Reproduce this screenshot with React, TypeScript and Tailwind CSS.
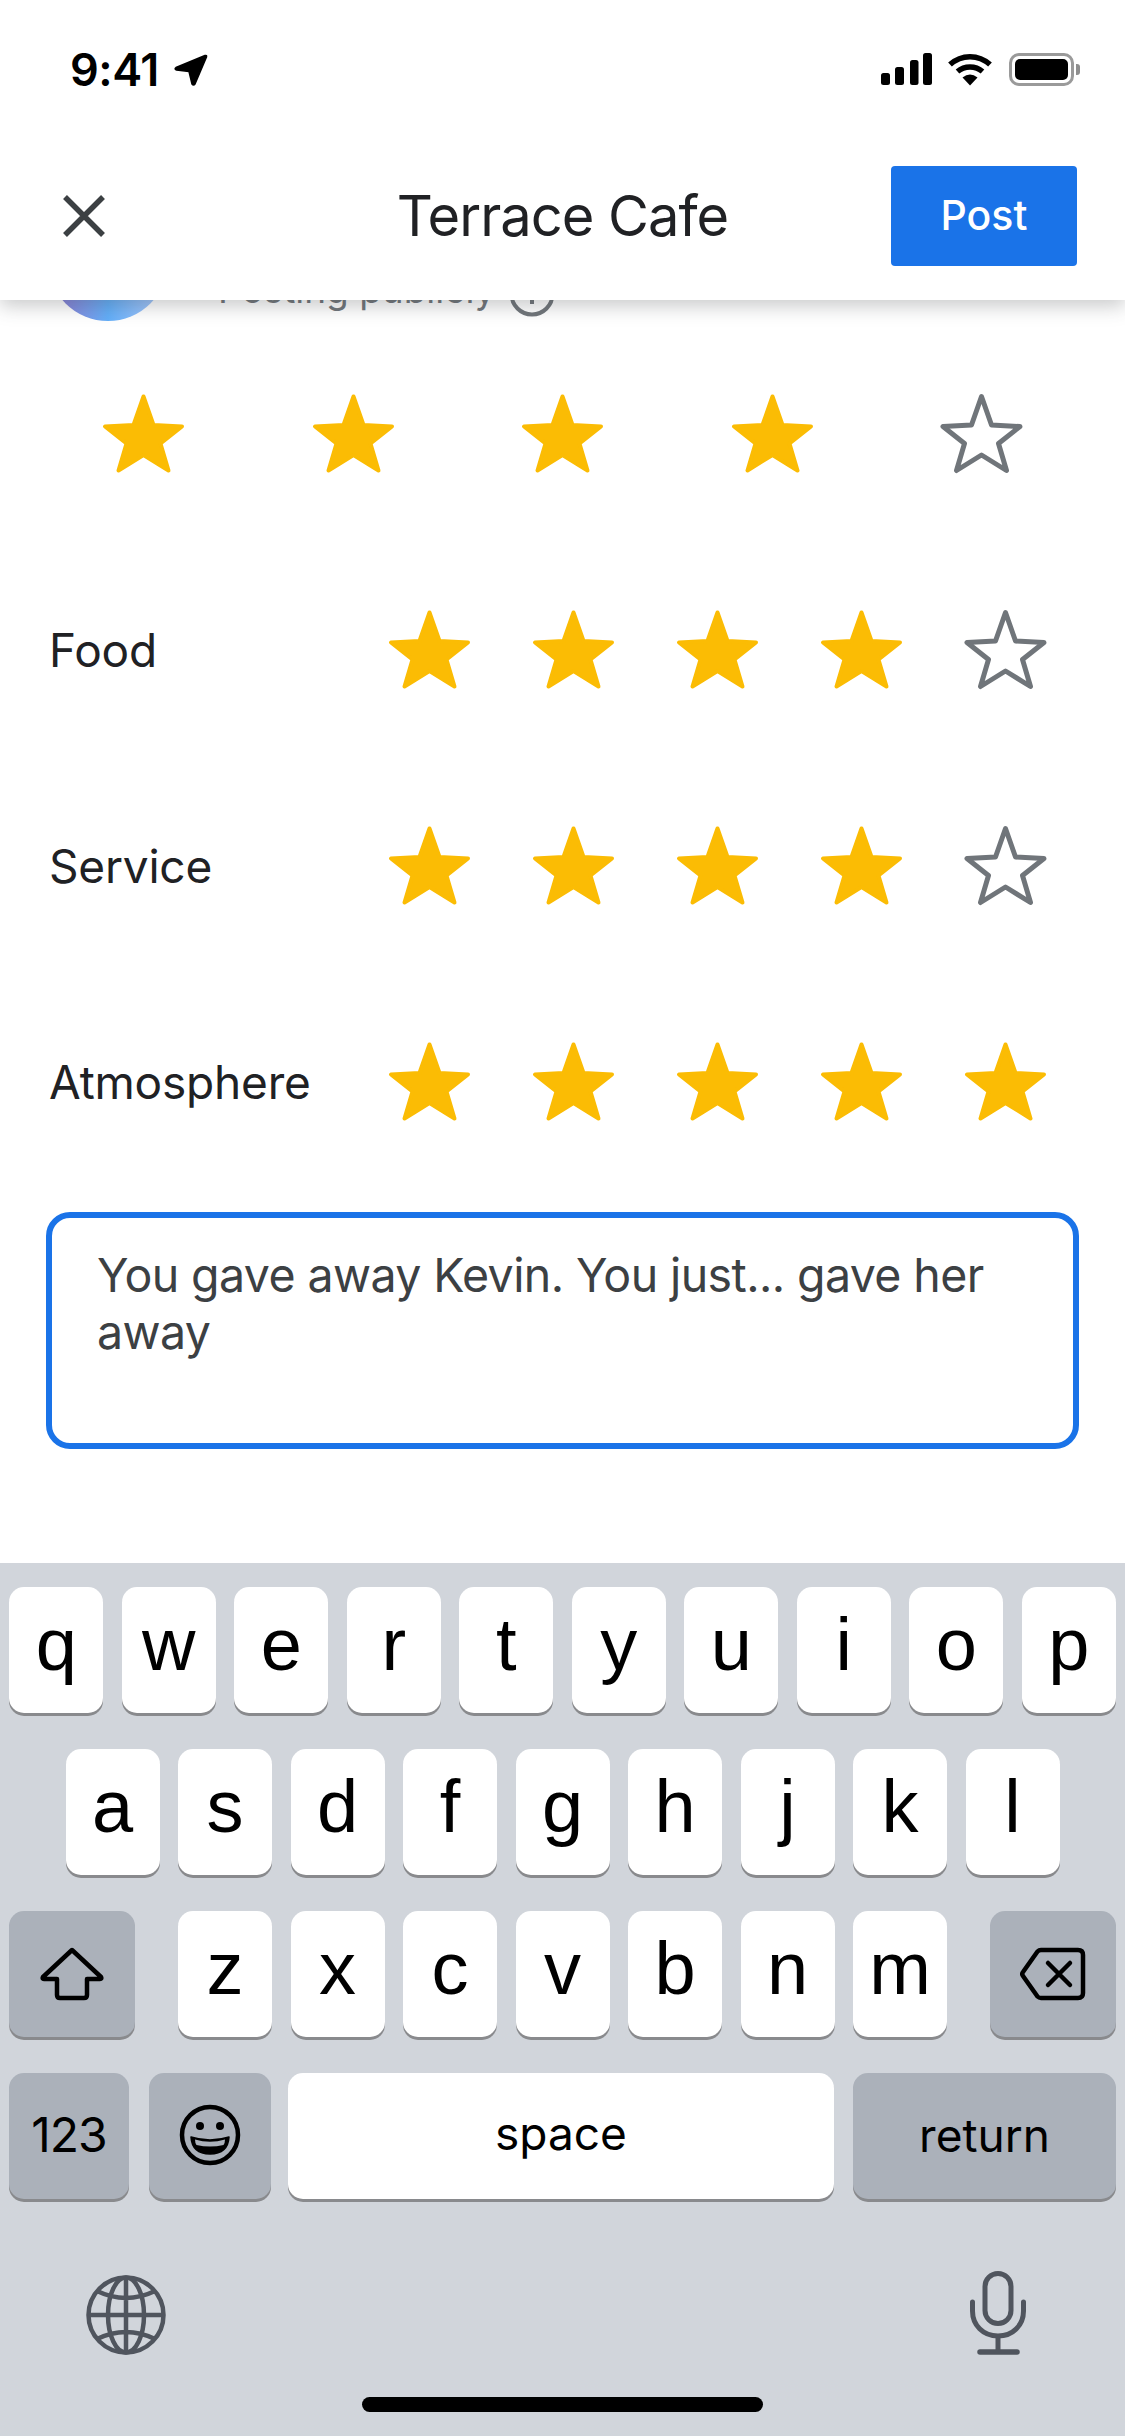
import React from "react";

const FONT = "font-['Inter','Noto_Sans',sans-serif]";
const STAR_POINTS = "40.5,2.5 50.5,31 79,32.5 57.5,49.5 65.5,76.5 40.5,61 15.5,76.5 23.5,49.5 2,32.5 30.5,31";

const Star: React.FC<{ filled: boolean }> = ({ filled }) => (
    <svg width="81" height="79" viewBox="0 0 81 79" className="shrink-0 overflow-visible">
        {filled ? (
            <polygon points={STAR_POINTS} fill="#fbbc04" stroke="#fbbc04" strokeWidth="4" strokeLinejoin="round" />
        ) : (
            <polygon points={STAR_POINTS} fill="none" stroke="#70757a" strokeWidth="5" strokeLinejoin="round" />
        )}
    </svg>
);

const RATINGS = [
    { label: "Food", score: 4 },
    { label: "Service", score: 4 },
    { label: "Atmosphere", score: 5 },
];

const StatusBar: React.FC = () => (
    <div className="relative z-20 bg-white h-[132px] flex justify-between items-start pt-[53px] pl-[70px] pr-[45px]">
        <div className="flex items-center gap-[14px] h-[33px]">
            <span className="text-[45px] leading-[33px] font-semibold text-black tracking-[-0.5px]">9:41</span>
            <svg width="35" height="34" viewBox="0 0 35 34">
                <path d="M32 2.5 L3 14.5 Q1 16 3.5 17 L16 18.5 L19 31 Q20.5 33 22 31 L33.5 4 Q34 2 32 2.5Z" fill="#000" stroke="#000" strokeWidth="1.5" strokeLinejoin="round" />
            </svg>
        </div>
        <div className="flex items-start">
            <svg width="51" height="33" viewBox="0 0 51 33">
                <rect x="0" y="20" width="9" height="12" rx="2.5" fill="#000" />
                <rect x="14" y="14" width="9" height="18" rx="2.5" fill="#000" />
                <rect x="29" y="7" width="8.5" height="25" rx="2.5" fill="#000" />
                <rect x="42" y="0" width="9" height="32" rx="2.5" fill="#000" />
            </svg>
            <svg width="46" height="33" viewBox="0 0 46 33" className="ml-[15px]">
                <path d="M3 11.5 C14.5 1 31.5 1 43 11.5" fill="none" stroke="#000" strokeWidth="5.5" />
                <path d="M10.5 18.5 C17.5 12.5 28.5 12.5 35.5 18.5" fill="none" stroke="#000" strokeWidth="5.5" />
                <path d="M15.5 24.5 Q23 18.5 30.5 24.5 L23 32.5Z" fill="#000" />
            </svg>
            <div className="ml-[16px] flex items-center">
                <div className="w-[65px] h-[33px] rounded-[10px] border-[3px] border-[#9a9a9a] p-[3px]">
                    <div className="w-full h-full rounded-[5px] bg-black" />
                </div>
                <div className="w-[4px] h-[11px] ml-[2px] rounded-r-[3px] bg-[#8e8e8e]" />
            </div>
        </div>
    </div>
);

const NavBar: React.FC = () => (
    <div className="relative z-10 h-[168px] bg-white shadow-[0_6px_18px_rgba(60,64,67,0.28)] grid grid-cols-[1fr_auto_1fr] items-start px-[48px]">
        <svg width="44" height="44" viewBox="0 0 44 44" className="mt-[62px] ml-[14px]">
            <path d="M3 3 L41 41 M41 3 L3 41" stroke="#3c4043" strokeWidth="5.5" fill="none" />
        </svg>
        <h1 className="text-[56px] leading-[60px] mt-[54px] font-normal text-[#202124] tracking-[-1px]">Terrace Cafe</h1>
        <button className="justify-self-end w-[186px] h-[100px] mt-[34px] rounded-[4px] bg-[#1a73e8] text-white text-[41px] font-medium">Post</button>
    </div>
);

const Key: React.FC<{ label: string }> = ({ label }) => (
    <div className="w-[94px] h-[126px] shrink-0 rounded-[15px] bg-white shadow-[0_3px_0_#898a8d] flex items-center justify-center font-['Liberation_Sans',sans-serif] text-[74px] leading-none text-black pb-[10px]">
        {label}
    </div>
);

const ActionKey: React.FC<{ className: string; children: React.ReactNode }> = ({ className, children }) => (
    <div className={`h-[126px] shrink-0 rounded-[15px] bg-[#abb1ba] shadow-[0_3px_0_#898a8d] flex items-center justify-center text-black ${className}`}>
        {children}
    </div>
);

const Keyboard: React.FC = () => (
    <div className="mt-auto h-[873px] bg-[#d1d5db] pt-[24px] flex flex-col">
        <div className="flex justify-center gap-[18.5px]">
            {"qwertyuiop".split("").map((k) => <Key key={k} label={k} />)}
        </div>
        <div className="flex justify-center gap-[18.5px] mt-[36px]">
            {"asdfghjkl".split("").map((k) => <Key key={k} label={k} />)}
        </div>
        <div className="flex justify-between px-[9px] mt-[36px]">
            <ActionKey className="w-[126px]">
                <svg width="64" height="54" viewBox="0 0 64 54">
                    <path d="M32 3 L61 30 Q62 32 60 32 L47 32 L47 48 Q47 51 44 51 L20 51 Q17 51 17 48 L17 32 L4 32 Q2 32 3 30Z" fill="none" stroke="#000" strokeWidth="4.5" strokeLinejoin="round" />
                </svg>
            </ActionKey>
            <div className="flex gap-[18.5px]">
                {"zxcvbnm".split("").map((k) => <Key key={k} label={k} />)}
            </div>
            <ActionKey className="w-[126px]">
                <svg width="66" height="54" viewBox="0 0 66 54">
                    <path d="M21 3 L58 3 Q63 3 63 8 L63 46 Q63 51 58 51 L21 51 Q19 51 17.5 49.5 L3 29 Q1.5 27 3 25 L17.5 4.5 Q19 3 21 3Z" fill="none" stroke="#000" strokeWidth="4.5" strokeLinejoin="round" />
                    <path d="M28 16 L50 38 M50 16 L28 38" stroke="#000" strokeWidth="4.5" strokeLinecap="round" />
                </svg>
            </ActionKey>
        </div>
        <div className="flex px-[9px] mt-[36px]">
            <ActionKey className="w-[120px] text-[48px] tracking-[-1px] pb-[2px]">123</ActionKey>
            <ActionKey className="w-[122px] ml-[20px] pb-[3px]">
                <svg width="62" height="62" viewBox="0 0 62 62">
                    <circle cx="31" cy="31" r="28" fill="none" stroke="#000" strokeWidth="4.5" />
                    <circle cx="21" cy="22" r="4" fill="#000" />
                    <circle cx="41" cy="22" r="4" fill="#000" />
                    <path d="M12 33 Q31 39 50 33 Q49 50 31 50 Q13 50 12 33Z" fill="#000" stroke="#000" strokeWidth="1.5" strokeLinejoin="round" />
                    <path d="M16 35.5 Q31 40 46 35.5 Q46 39 44.5 41 Q31 44 17.5 41 Q16 39 16 35.5Z" fill="#abb1ba" />
                </svg>
            </ActionKey>
            <div className="w-[546px] h-[126px] ml-[17px] shrink-0 rounded-[15px] bg-white shadow-[0_3px_0_#898a8d] flex items-center justify-center text-[46px] text-black pb-[5px]">space</div>
            <ActionKey className="w-[263px] ml-[19px] text-[46px] pb-[2px]">return</ActionKey>
        </div>
        <div className="flex items-center justify-between pl-[86px] pr-[99px] mt-[72px] h-[84px]">
            <svg width="80" height="80" viewBox="0 0 80 80" className="mt-[4px]" fill="none" stroke="#50555e" strokeWidth="4.5">
                <circle cx="40" cy="40" r="37.5" />
                <ellipse cx="40" cy="40" rx="18" ry="37.5" />
                <path d="M40 2.5 V77.5 M2.5 40 H77.5 M11 16 Q40 30 69 16 M11 64 Q40 50 69 64" />
            </svg>
            <svg width="56" height="84" viewBox="0 0 56 84" fill="none" stroke="#50555e">
                <rect x="15" y="2.5" width="26" height="50" rx="13" strokeWidth="5" />
                <path d="M2.5 31 V40 C2.5 54 13 65 28 65 C43 65 53.5 54 53.5 40 V31" strokeWidth="5" strokeLinecap="round" />
                <path d="M28 65 V80" strokeWidth="5" />
                <path d="M10 81 H47" strokeWidth="5.5" strokeLinecap="round" />
            </svg>
        </div>
        <div className="w-[401px] h-[15px] rounded-full bg-black mx-auto mt-[42px]" />
    </div>
);

export default function App() {
    return (
        <div className={`w-[1125px] h-[2436px] bg-white overflow-hidden flex flex-col ${FONT}`}>
            <StatusBar />
            <NavBar />

            {/* Author row sits mostly under the nav bar */}
            <div className="flex items-end h-[120px] mt-[-99px] pl-[48px]">
                <div className="w-[120px] h-[120px] rounded-full bg-gradient-to-r from-[#8a72cc] via-[#62aef8] to-[#b0cbfc]" />
                <span className="ml-[50px] mb-[7px] text-[37px] leading-[48px] text-[#70757a]">Posting publicly</span>
                <svg width="46" height="46" viewBox="0 0 46 46" className="ml-[14px] mb-[4px]" fill="none" stroke="#70757a" strokeWidth="4">
                    <circle cx="23" cy="23" r="20.5" />
                    <path d="M23 21 V33 M23 13 V16" />
                </svg>
            </div>

            <div className="flex justify-between px-[103px] mt-[73px]">
                {[0, 1, 2, 3, 4].map((i) => <Star key={i} filled={i < 4} />)}
            </div>

            {RATINGS.map((row) => (
                <div key={row.label} className="flex items-center justify-between pl-[49px] pr-[79px] mt-[137px]">
                    <span className="text-[46px] leading-[56px] text-[#202124] tracking-[-0.2px]">{row.label}</span>
                    <div className="flex gap-[63px]">
                        {[0, 1, 2, 3, 4].map((i) => <Star key={i} filled={i < row.score} />)}
                    </div>
                </div>
            ))}

            <div className="mx-[46px] mt-[91px] h-[237px] rounded-[24px] border-[6px] border-[#1a73e8] pl-[45px] pr-[60px] pt-[29px] text-[46.5px] leading-[57px] text-[#3c4043] tracking-[-0.6px]">
                You gave away Kevin. You just... gave her away
            </div>

            <Keyboard />
        </div>
    );
}
